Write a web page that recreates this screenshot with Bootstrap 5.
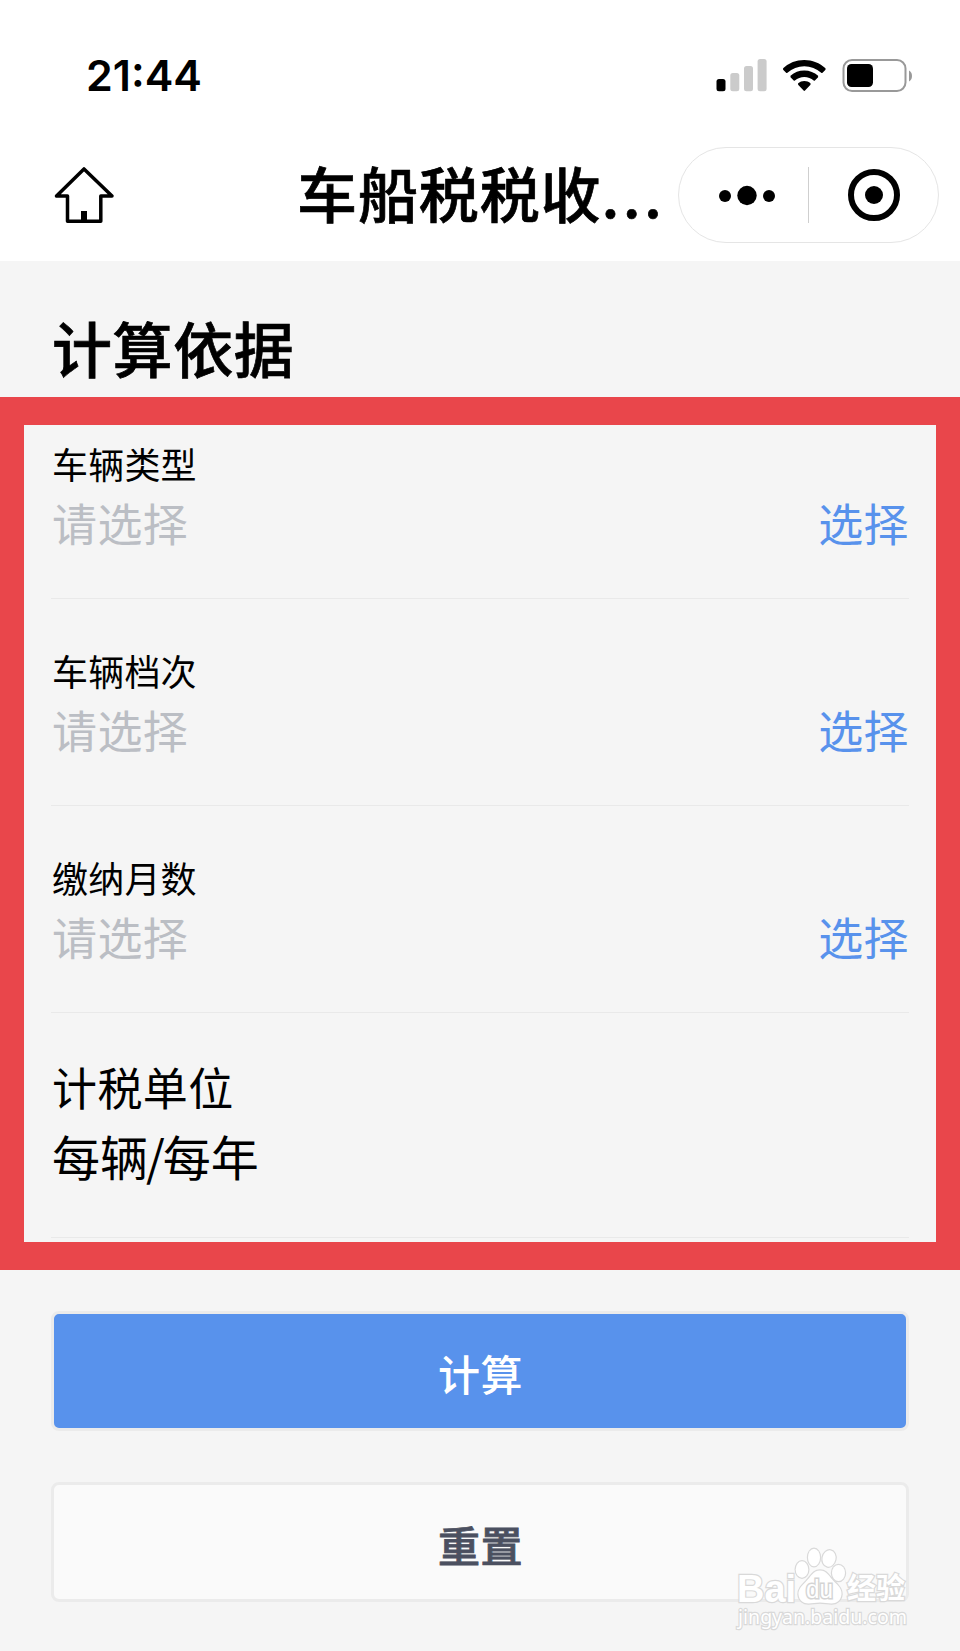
<!DOCTYPE html>
<html lang="zh-CN">
<head>
<meta charset="utf-8">
<meta name="viewport" content="width=device-width, initial-scale=1">
<title>车船税税收计算</title>
<link rel="stylesheet" href="https://cdn.jsdelivr.net/npm/bootstrap@5.3.0/dist/css/bootstrap.min.css">
<style>
  body { background: #f5f5f5; color: #000; font-family: "Noto Sans CJK SC", sans-serif; width: 960px; height: 1651px; overflow: hidden; }
  .status-bar { height: 131px; padding: 19px 47px 0 86px; }
  .clock { font: 600 43px/1 Inter, sans-serif; letter-spacing: 0; }
  .title-bar { height: 130px; padding: 0 21px 2px 54px; }
  .page-title { font-size: 60px; font-weight: 500; line-height: 1; letter-spacing: .9px; margin-left: 183px; padding-bottom: 7px; -webkit-text-stroke: .7px #000; }
  .dots { letter-spacing: 3.4px; }
  .capsule { width: 261px; height: 96px; border: 1px solid #e5e5e5; border-radius: 48px; }
  .section-head { height: 136px; padding: 36px 51px 0 52px; font-size: 60px; font-weight: 500; letter-spacing: .6px; line-height: 1; -webkit-text-stroke: .7px #000; }
  .form-frame { height: 873px; border: solid #e9464b; border-width: 28px 24px; padding: 0 27px; }
  .field-row { height: 207px; border-bottom: 1px solid #e9e9e9; padding: 42px 1px 0; }
  .field-row.first-row { height: 174px; padding-top: 9px; }
  .field-row.unit-row { height: 225px; padding-top: 41px; }
  .field-label { font-size: 36px; line-height: 58px; letter-spacing: .2px; }
  .field-value { font-size: 45px; line-height: 62px; letter-spacing: .4px; }
  .hint { color: #bbbec4; }
  .pick { color: #5892ec; font-size: 45px; line-height: 62px; letter-spacing: .4px; margin-right: -1px; }
  .unit-label { font-size: 45px; line-height: 66px; letter-spacing: .4px; }
  .unit-value { font-size: 48px; line-height: 70px; }
  .slash { margin: 0 -2px; }
  .actions { padding: 41px 51px 0; gap: 51px; }
  .btn-big { height: 120px; border: 3px solid #ebebeb; border-radius: 8px; font-size: 42px; font-weight: 500; letter-spacing: .6px; line-height: 1; padding: 3px 0 0 1px; }
  .btn-calc, .btn-calc:hover { background: #5892ec; color: #fff; }
  .btn-reset, .btn-reset:hover { background: #fafafa; color: #4b5060; -webkit-text-stroke: .8px #4b5060; }
  .watermark { left: 730px; top: 1540px; }
</style>
</head>
<body class="position-relative">
<header class="bg-white">
  <div class="status-bar d-flex align-items-center justify-content-between pb-0">
    <span class="clock">21:44</span>
    <svg width="198" height="36" viewBox="715 57 198 36">
      <rect x="716.5" y="79" width="9" height="12.3" rx="2.5"/>
      <g fill="#cbcbcb"><rect x="730.3" y="73" width="9" height="18.3" rx="2.5"/><rect x="744" y="66" width="9" height="25.3" rx="2.5"/><rect x="757.6" y="59" width="9" height="32.3" rx="2.5"/></g>
      <path d="M804.3 60c8 0 15.500 3 21.200 8.300v1.500l-3 3c-.4.4-.9.4-1.300 0a25 25 0 0 0-33.800 0c-.4.4-.9.400-1.300 0l-3-3v-1.500A31 31 0 0 1 804.300 60z"/>
      <path d="M804.300 70.500c5.300 0 10.100 2 13.800 5.300v1.400l-3.200 3.200c-.4.300-.8.300-1.200 0a14.300 14.300 0 0 0-18.800 0c-.4.300-.8.300-1.200 0l-3.200-3.200v-1.400a20.500 20.500 0 0 1 13.800-5.300z"/>
      <path d="M804.300 81c2.400 0 4.500.8 6.200 2.200v1.600l-5.500 5.800c-.4.400-1 .400-1.400 0l-5.500-5.800v-1.600a9.800 9.800 0 0 1 6.200-2.200z"/>
      <rect x="843.5" y="60" width="62" height="31" rx="8.500" fill="none" stroke="#999" stroke-width="2"/>
      <rect x="847" y="64" width="26" height="23" rx="4.500"/>
      <path d="M909 70.500c4 2 4 9 0 11z" fill="#999"/>
    </svg>
  </div>
  <div class="title-bar d-flex align-items-center">
    <svg width="60" height="60" viewBox="54 165 60 60" fill="none" stroke="#000" stroke-width="3.500" stroke-linejoin="round" stroke-linecap="round">
      <path d="M84 168.900L56.500 196H67.500V221.300H100.800V196H112L84 168.900z"/>
      <path d="M84 211v9" stroke-width="6" stroke-linecap="butt"/>
    </svg>
    <div class="page-title text-nowrap">车船税税收<span class="dots">...</span></div>
    <div class="capsule ms-auto flex-shrink-0">
      <svg class="d-block" width="259" height="94" viewBox="679 148 259 94">
        <circle cx="725" cy="196" r="6"/><circle cx="747" cy="195.500" r="9.700"/><circle cx="769" cy="196" r="6"/>
        <path d="M808.500 167v56" stroke="#cfcfcf"/>
        <circle cx="874" cy="195" r="23" fill="none" stroke="#000" stroke-width="6"/><circle cx="874" cy="195" r="9"/>
      </svg>
    </div>
  </div>
</header>
<main>
  <h1 class="section-head m-0 d-flex align-items-center">计算依据</h1>
  <section class="form-frame">
    <div class="field-row first-row">
      <div class="field-label">车辆类型</div>
      <div class="d-flex justify-content-between"><span class="field-value hint">请选择</span><a class="pick text-decoration-none">选择</a></div>
    </div>
    <div class="field-row">
      <div class="field-label">车辆档次</div>
      <div class="d-flex justify-content-between"><span class="field-value hint">请选择</span><a class="pick text-decoration-none">选择</a></div>
    </div>
    <div class="field-row">
      <div class="field-label">缴纳月数</div>
      <div class="d-flex justify-content-between"><span class="field-value hint">请选择</span><a class="pick text-decoration-none">选择</a></div>
    </div>
    <div class="field-row unit-row">
      <div class="unit-label">计税单位</div>
      <div class="unit-value">每辆<span class="slash">/</span>每年</div>
    </div>
  </section>
  <div class="actions d-grid">
    <button class="btn btn-big btn-calc" type="button">计算</button>
    <button class="btn btn-big btn-reset" type="button">重置</button>
  </div>
</main>
<svg class="watermark position-absolute" width="185" height="100" viewBox="730 1540 185 100" fill="#fff" stroke="#d9d9d9" stroke-width="2.400" paint-order="stroke">
  <g stroke-width="2.400">
    <ellipse cx="802" cy="1569.500" rx="6.300" ry="8.200"/><ellipse cx="814" cy="1557.500" rx="6" ry="8.700"/>
    <ellipse cx="829" cy="1558.500" rx="6.500" ry="8.300" transform="rotate(12 829 1558.500)"/><ellipse cx="838.500" cy="1573" rx="6.500" ry="8"/>
    <path d="M820 1570.500c7 0 9 6 14 11 5 4.500 8 8 7.500 13-.6 6-5 9-10 9-4 0-7-1-11.500-1s-7.500 1-11.500 1c-5 0-9.500-3-10-9-.4-5 3-8.500 7.500-13 5-5 7-11 14-11z"/>
  </g>
  <text x="737" y="1602" font-family="Liberation Sans" font-weight="700" font-size="38" textLength="59" lengthAdjust="spacingAndGlyphs">Bai</text>
  <text x="806" y="1598" font-family="Liberation Sans" font-size="25" font-weight="400" fill="#fff" stroke="#d4d4d4" stroke-width="3" textLength="27" lengthAdjust="spacingAndGlyphs">du</text>
  <text x="847" y="1599" font-family="Noto Sans CJK SC" font-weight="700" font-size="29" textLength="58" lengthAdjust="spacingAndGlyphs">经验</text>
  <text x="738" y="1624" font-family="Noto Sans" font-size="20" textLength="169" lengthAdjust="spacingAndGlyphs">jingyan.baidu.com</text>
</svg>
<script src="https://cdn.jsdelivr.net/npm/bootstrap@5.3.0/dist/js/bootstrap.bundle.min.js"></script>
</body>
</html>
